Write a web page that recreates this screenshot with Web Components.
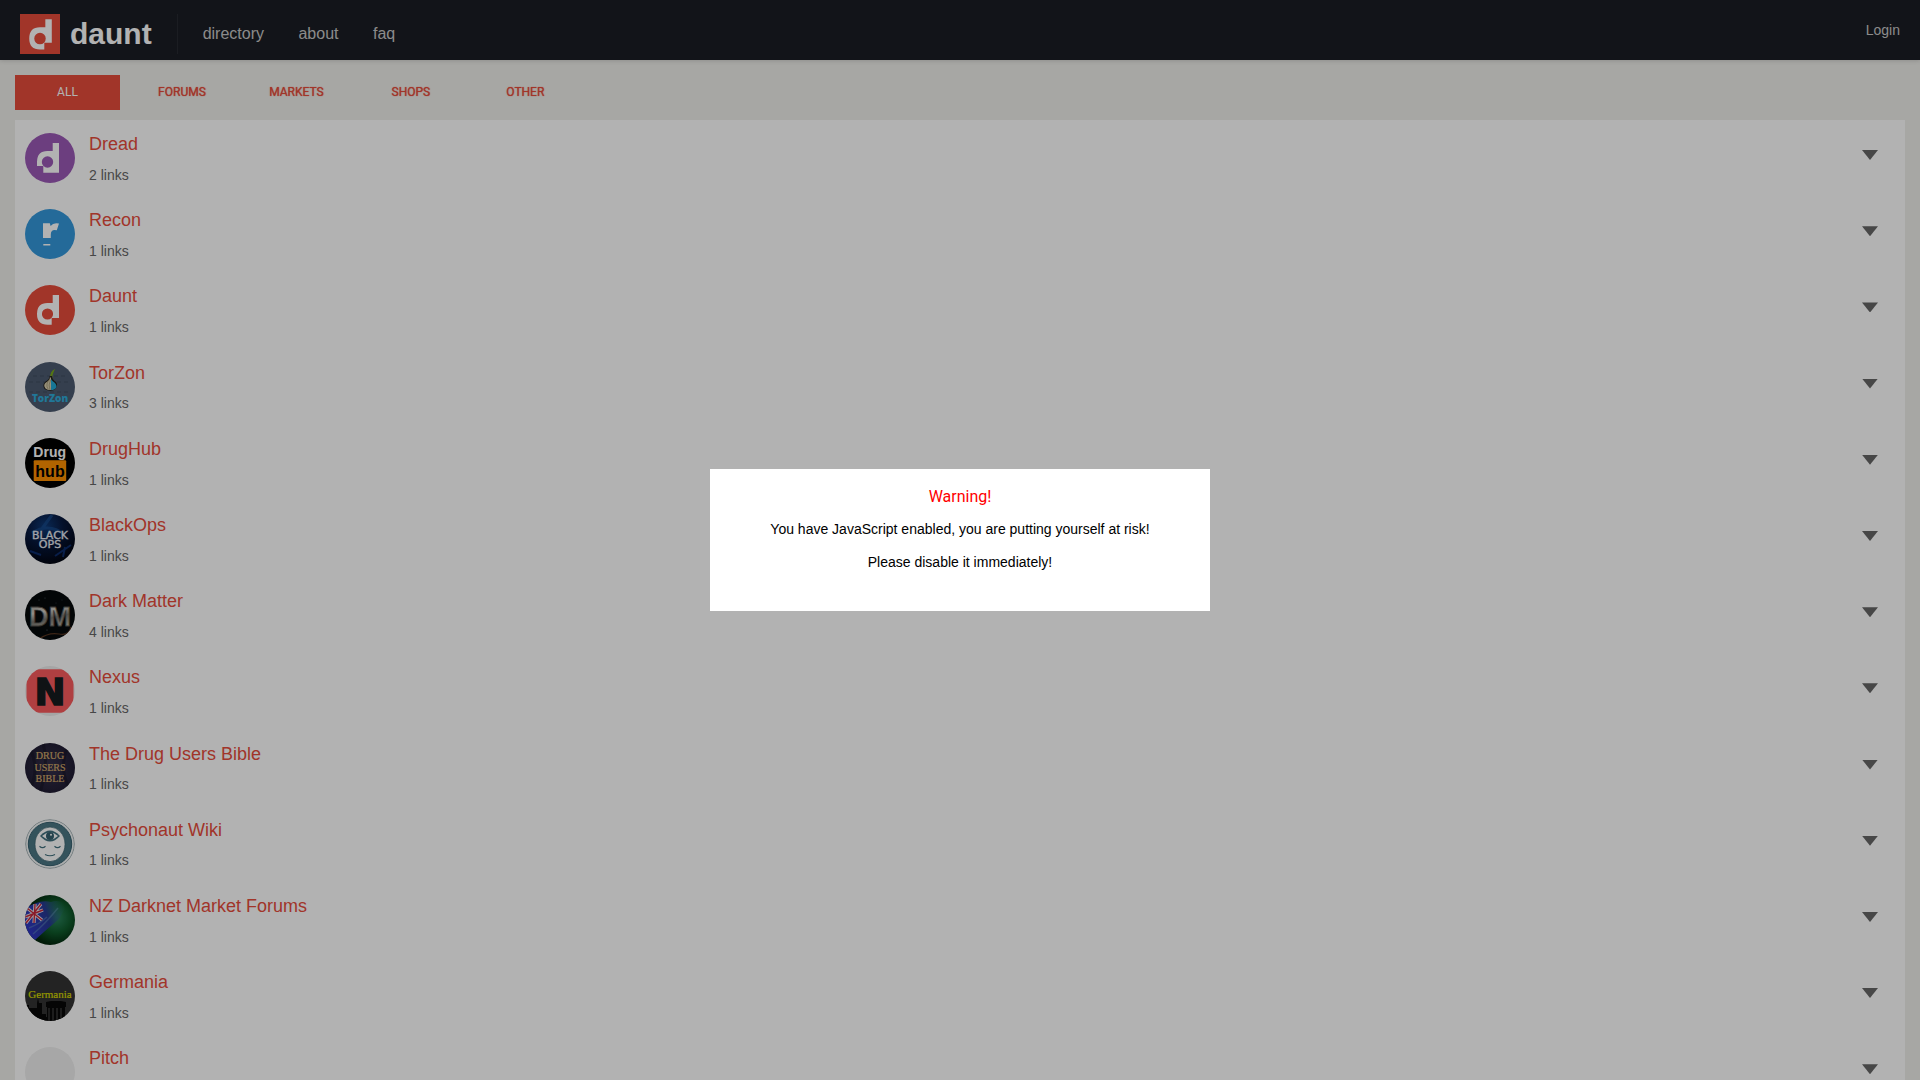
<!DOCTYPE html>
<html lang="en">
<head>
<meta charset="utf-8">
<title>Daunt</title>
<style>
  body { margin: 0; background: #efefeb; font-family: "Liberation Sans", Arial, sans-serif; font-size: 14px; line-height: 1.6; color: #666; }
</style>
</head>
<body>
<daunt-app></daunt-app>
<script>
const define = (name, html, init) => {
  const template = document.createElement('template');
  template.innerHTML = html;
  customElements.define(name, class extends HTMLElement {
    constructor() {
      super();
      this.attachShadow({ mode: 'open' }).append(template.content.cloneNode(true));
    }
    connectedCallback() { if (init) init(this, this.shadowRoot); }
  });
};

const dauntMark = '<path fill="#fff" fill-rule="evenodd" d="M34 10H27.7V18H22.5Q12 18 12 29Q12 39.7 22.5 39.7H26.7V33H34ZM22.5 23.4A5.6 5.6 0 1 1 22.5 34.6A5.6 5.6 0 1 1 22.5 23.4Z"/>';

const icons = {
  dread: `<rect width="50" height="50" fill="#9b59b6"/>
    <path fill="#fff" d="M12 33V29Q12 18 22.5 18H27.7V10H34V39.7H18.3V33Z"/><circle cx="22.5" cy="29" r="5.7" fill="#9b59b6"/>`,
  recon: `<rect width="50" height="50" fill="#3498db"/>
    <path fill="#fff" d="M18 14.2H24.8L25.6 17Q28.4 13.2 34 14.6L31.8 21.3Q25.8 19.8 25.8 25.5V29H18ZM18.3 35H25.3V36.6H18.3Z"/>`,
  daunt: `<rect width="50" height="50" fill="#e74c3c"/>${dauntMark}`,
  torzon: `<rect width="50" height="50" fill="#4d5b70"/>
    <path d="M4 20H46M8 14H42M4 30H46" stroke="#465367" stroke-width="2" stroke-dasharray="4 3"/>
    <path fill="#78a81a" d="M25 16Q25 9 30 7Q28.500 10 28 12Q27 13 27.400 17Z"/>
    <path fill="#25231c" d="M24.500 14Q25 17 20 20Q17 23 19.500 27Q24 30 29 28Q34 24 31 20Q27.500 18 27 14Z"/>
    <path fill="#d9cfae" d="M25 15Q25 18 21 20.500Q17.700 23 20.500 26.500Q23 28.500 26 28V16Z"/>
    <path fill="#22a9d6" d="M26 17Q27 19 30 21Q33.500 25 29 27.500Q27.500 28.200 26 28Z"/>
    <path stroke="#8d835f" fill="none" stroke-width=".6" d="M25 17Q20 22 23 27M25.500 18Q23 23 25 28"/>
    <text x="25" y="40" text-anchor="middle" font-family="Open Sans" font-weight="800" font-size="10" fill="#2fabda">TorZon</text>`,
  drughub: `<rect width="50" height="50" fill="#000"/>
    <text x="24.700" y="18.700" text-anchor="middle" font-family="Liberation Sans" font-weight="700" font-size="14" fill="#fff">Drug</text>
    <rect x="8.700" y="22.300" width="32.500" height="20.700" rx="1" fill="#ff9000"/>
    <text x="25" y="38.700" text-anchor="middle" font-family="Liberation Sans" font-weight="700" font-size="16" fill="#000">hub</text>`,
  blackops: `<defs><radialGradient id="g" cx=".4" cy=".25" r=".8"><stop offset="0" stop-color="#0e3a78"/><stop offset=".45" stop-color="#07183d"/><stop offset="1" stop-color="#02040d"/></radialGradient></defs>
    <rect width="50" height="50" fill="url(#g)"/>
    <path d="M16 16L27 1M7 19Q24 8 40 21" stroke="#1a5296" stroke-width="3" opacity=".6" fill="none"/>
    <path d="M30 42L46 31M5 37L16 41M38 43L40 33" stroke="#103a8a" stroke-width="2" opacity=".7"/>
    <g font-family="DejaVu Sans" font-size="11" fill="#e8ebf2" stroke="#e8ebf2" stroke-width=".3" text-anchor="middle"><text x="25" y="24.500">BLACK</text><text x="25" y="34">OPS</text></g>`,
  darkmatter: `<defs><linearGradient id="g" x2=".3" y2="1"><stop offset="0" stop-color="#8c8c88"/><stop offset=".4" stop-color="#d0cdc5"/><stop offset=".65" stop-color="#777570"/><stop offset="1" stop-color="#b5b1a5"/></linearGradient></defs>
    <rect width="50" height="50" fill="#05090b"/>
    <path d="M14 49Q24 42 34 44T46 37" stroke="#573520" fill="none" stroke-width="1.200"/>
    <g fill="#526268"><circle cx="14" cy="10" r=".5"/><circle cx="20" cy="8" r=".5"/><circle cx="31" cy="13" r=".4"/><circle cx="22" cy="40" r=".6"/><circle cx="37" cy="10" r=".4"/></g>
    <text x="25" y="35.500" text-anchor="middle" font-family="Liberation Sans" font-weight="700" font-size="27" fill="url(#g)" stroke="#55534e" stroke-width=".8">DM</text>`,
  nexus: `<rect width="50" height="50" fill="#ededed"/>
    <rect x="1.500" y="3.300" width="47" height="43.500" rx="13" fill="#fb5b5d"/>
    <text x="25" y="38.700" text-anchor="middle" font-family="DejaVu Sans" font-weight="700" font-size="37" fill="#161c1f" stroke="#161c1f" stroke-width="1.600">N</text>`,
  bible: `<defs><radialGradient id="g"><stop offset="0" stop-color="#35304c"/><stop offset="1" stop-color="#201d33"/></radialGradient></defs>
    <rect width="50" height="50" fill="url(#g)"/>
    <path d="M6 8Q14 25 6 44M42 5Q34 25 44 45M18 0Q24 20 15 50" stroke="#171526" stroke-width="3" fill="none" opacity=".6"/>
    <g font-family="Liberation Serif" font-size="10" fill="#d3ab6b" stroke="#d3ab6b" stroke-width=".2" text-anchor="middle"><text x="25" y="16">DRUG</text><text x="25" y="27.500">USERS</text><text x="25" y="39">BIBLE</text></g>`,
  psychonaut: `<rect width="50" height="50" fill="#fff"/>
    <circle cx="25" cy="25" r="24.300" fill="#f4f6f6" stroke="#a3b1b5" stroke-width="1"/>
    <circle cx="25" cy="25" r="21.700" fill="#4b7785" stroke="#35606f" stroke-width="1"/>
    <ellipse cx="25" cy="25.300" rx="15" ry="17.300" fill="#fff" stroke="#37606c" stroke-width=".7"/>
    <path fill="#41707e" d="M15 17Q20 11.500 25 11.500T35 17Q30 22.500 25 22.500T15 17Z"/>
    <path fill="#fff" d="M17 17Q21 13.300 25 13.300T33 17Q29 20.700 25 20.700T17 17Z"/>
    <circle cx="25" cy="17" r="4" fill="#35606f"/><circle cx="26" cy="15.700" r="1" fill="#fff"/>
    <path fill="none" stroke="#41707e" stroke-width="1.200" d="M14.500 27.300Q17.500 30 20.500 27.300M29.500 27.300Q32.500 30 35.500 27.300M20 35.500Q25 38 30 35.500"/>`,
  nz: `<defs><radialGradient id="g" cx=".62" cy=".45" r=".55"><stop offset="0" stop-color="#2c8460"/><stop offset=".55" stop-color="#0f5a2b"/><stop offset="1" stop-color="#03280d"/></radialGradient>
    <linearGradient id="b" x1="0" y1=".6" x2="1" y2=".3"><stop offset="0" stop-color="#3036c6"/><stop offset=".55" stop-color="#263a92"/><stop offset="1" stop-color="#2b7a74" stop-opacity="0"/></linearGradient></defs>
    <rect width="50" height="50" fill="url(#g)"/>
    <path fill="url(#b)" d="M0 14Q14 4 26 7Q34 4 42 10L34 24Q22 34 10 45L0 38Z"/>
    <path d="M8 39Q20 29 33 13M4 33Q14 29 22 22" stroke="#6f9fbe" stroke-width="1.500" opacity=".4" fill="none"/>
    <path d="M0 22L18 15M10 9L9 28M2 13L17 25M1 28L16 9" stroke="#e6e0e4" stroke-width="3.200"/>
    <path d="M0 22L18 15M10 9L9 28M2 13L17 25M1 28L16 9" stroke="#c4283c" stroke-width="1.400"/>`,
  germania: `<rect width="50" height="50" fill="#333"/>
    <path fill="#080808" d="M0 34H4V37H12V32L13 27L14 32H17V43H21V46H22V36H21V31L26 30H36L41 31V36H40V50H0Z"/>
    <path d="M24 37V50M28 37V50M32 37V50M36 37V50" stroke="#343434" stroke-width="1.600"/>
    <text x="25" y="27" text-anchor="middle" font-family="Liberation Serif" font-size="11" fill="#d6d700" stroke="#d6d700" stroke-width=".2">Germania</text>`,
  pitch: `<rect width="50" height="50" fill="#efefef"/>`
};

define('site-icon', `
  <style>
    :host { display: block; flex: none; width: 50px; height: 50px; border-radius: 50%; overflow: hidden; }
    svg { display: block; width: 100%; height: 100%; }
  </style>
  <svg viewBox="0 0 50 50" aria-hidden="true"></svg>`,
  (el, root) => { root.querySelector('svg').innerHTML = icons[el.getAttribute('name')] || ''; });

define('site-header', `
  <style>
    :host { display: flex; justify-content: space-between; align-items: center; box-sizing: border-box; height: 60px; padding: 0 20px;
      background: #1b1e24; box-shadow: 0 0 5px rgba(0,0,0,.2); position: relative; }
    .left { display: flex; align-items: center; padding-top: 8px; }
    a { color: #c8c8c8; text-decoration: none; }
    .brand { display: flex; align-items: center; gap: 10px; color: #fff; font-size: 30px; line-height: 40px; font-weight: bold; }
    .brand svg { width: 40px; height: 40px; background: #e74c3c; }
    nav { margin-left: 25px; padding-left: 25px; border-left: 1px solid #272a31; font-size: 16px; line-height: 40px; }
    nav a { margin-right: 30px; }
  </style>
  <div class="left">
    <a class="brand" href="#"><svg viewBox="3 5 39 39" aria-hidden="true">${dauntMark}</svg>daunt</a>
    <nav><a href="#directory">directory</a> <a href="#about">about</a> <a href="#faq">faq</a></nav>
  </div>
  <a href="#login">Login</a>`);

define('category-tabs', `
  <style>
    :host { display: block; padding: 15px 0 10px; font-size: 16px; line-height: 35px; height: 35px; }
    ::slotted(a) { display: inline-block; width: 105px; margin-right: 5px; text-align: center; vertical-align: top;
      font: 400 12px/35px Roboto, sans-serif; color: #e74c3c; text-decoration: none; text-shadow: 0 0 1px #e74c3c; }
    ::slotted(a[aria-current]) { background: #e74c3c; color: #fff; text-shadow: none; }
  </style>
  <slot></slot>`);

define('site-row', `
  <style>
    :host { display: flex; align-items: flex-start; padding: 10px; }
    site-icon { margin: 3px 14px 0 0; }
    .text { flex: 1; }
    a { display: block; margin-bottom: 5px; font-size: 18px; color: #e74c3c; text-decoration: none; }
    button { margin: 15px 12px 0 0; padding: 5px; border: 0; background: none; cursor: pointer; }
    button::before { content: ""; display: block; width: 16px; height: 10px; background: #666; clip-path: polygon(0 0, 100% 0, 50% 100%); }
  </style>
  <div class="text"><a href="#"><slot></slot></a><div class="count"></div></div>
  <button type="button" aria-label="Show links"></button>`,
  (el, root) => {
    const icon = document.createElement('site-icon');
    icon.setAttribute('name', el.getAttribute('icon'));
    root.querySelector('.text').before(icon);
    if (el.hasAttribute('links')) root.querySelector('.count').textContent = el.getAttribute('links') + ' links';
  });

define('warning-dialog', `
  <style>
    :host { position: fixed; inset: 0; display: flex; align-items: center; justify-content: center; background: rgba(0,0,0,.3); }
    section { box-sizing: border-box; width: 500px; max-width: 100%; padding: 16px 20px 36px; display: flex; flex-direction: column;
      background: #fff; color: #000; text-align: center; line-height: 22px; }
    ::slotted(p) { margin: 9px 0 2px; }
    h2 { margin: 0; font: 400 16px/24px Roboto, sans-serif; color: #f00; }
  </style>
  <section role="dialog"><h2><slot name="title"></slot></h2><slot></slot></section>`);

define('daunt-app', `
  <style>
    :host { display: block; height: 100vh; overflow: hidden; }
    main { padding: 0 15px; }
    .list { background: #fff; }
  </style>
  <site-header></site-header>
  <main>
    <category-tabs>
      <a href="#all" aria-current="page">ALL</a>
      <a href="#forums">FORUMS</a>
      <a href="#markets">MARKETS</a>
      <a href="#shops">SHOPS</a>
      <a href="#other">OTHER</a>
    </category-tabs>
    <div class="list">
      <site-row icon="dread" links="2">Dread</site-row>
      <site-row icon="recon" links="1">Recon</site-row>
      <site-row icon="daunt" links="1">Daunt</site-row>
      <site-row icon="torzon" links="3">TorZon</site-row>
      <site-row icon="drughub" links="1">DrugHub</site-row>
      <site-row icon="blackops" links="1">BlackOps</site-row>
      <site-row icon="darkmatter" links="4">Dark Matter</site-row>
      <site-row icon="nexus" links="1">Nexus</site-row>
      <site-row icon="bible" links="1">The Drug Users Bible</site-row>
      <site-row icon="psychonaut" links="1">Psychonaut Wiki</site-row>
      <site-row icon="nz" links="1">NZ Darknet Market Forums</site-row>
      <site-row icon="germania" links="1">Germania</site-row>
      <site-row icon="pitch">Pitch</site-row>
    </div>
  </main>
  <warning-dialog>
    <span slot="title">Warning!</span>
    <p>You have JavaScript enabled, you are putting yourself at risk!</p>
    <p>Please disable it immediately!</p>
  </warning-dialog>`);
</script>
</body>
</html>
